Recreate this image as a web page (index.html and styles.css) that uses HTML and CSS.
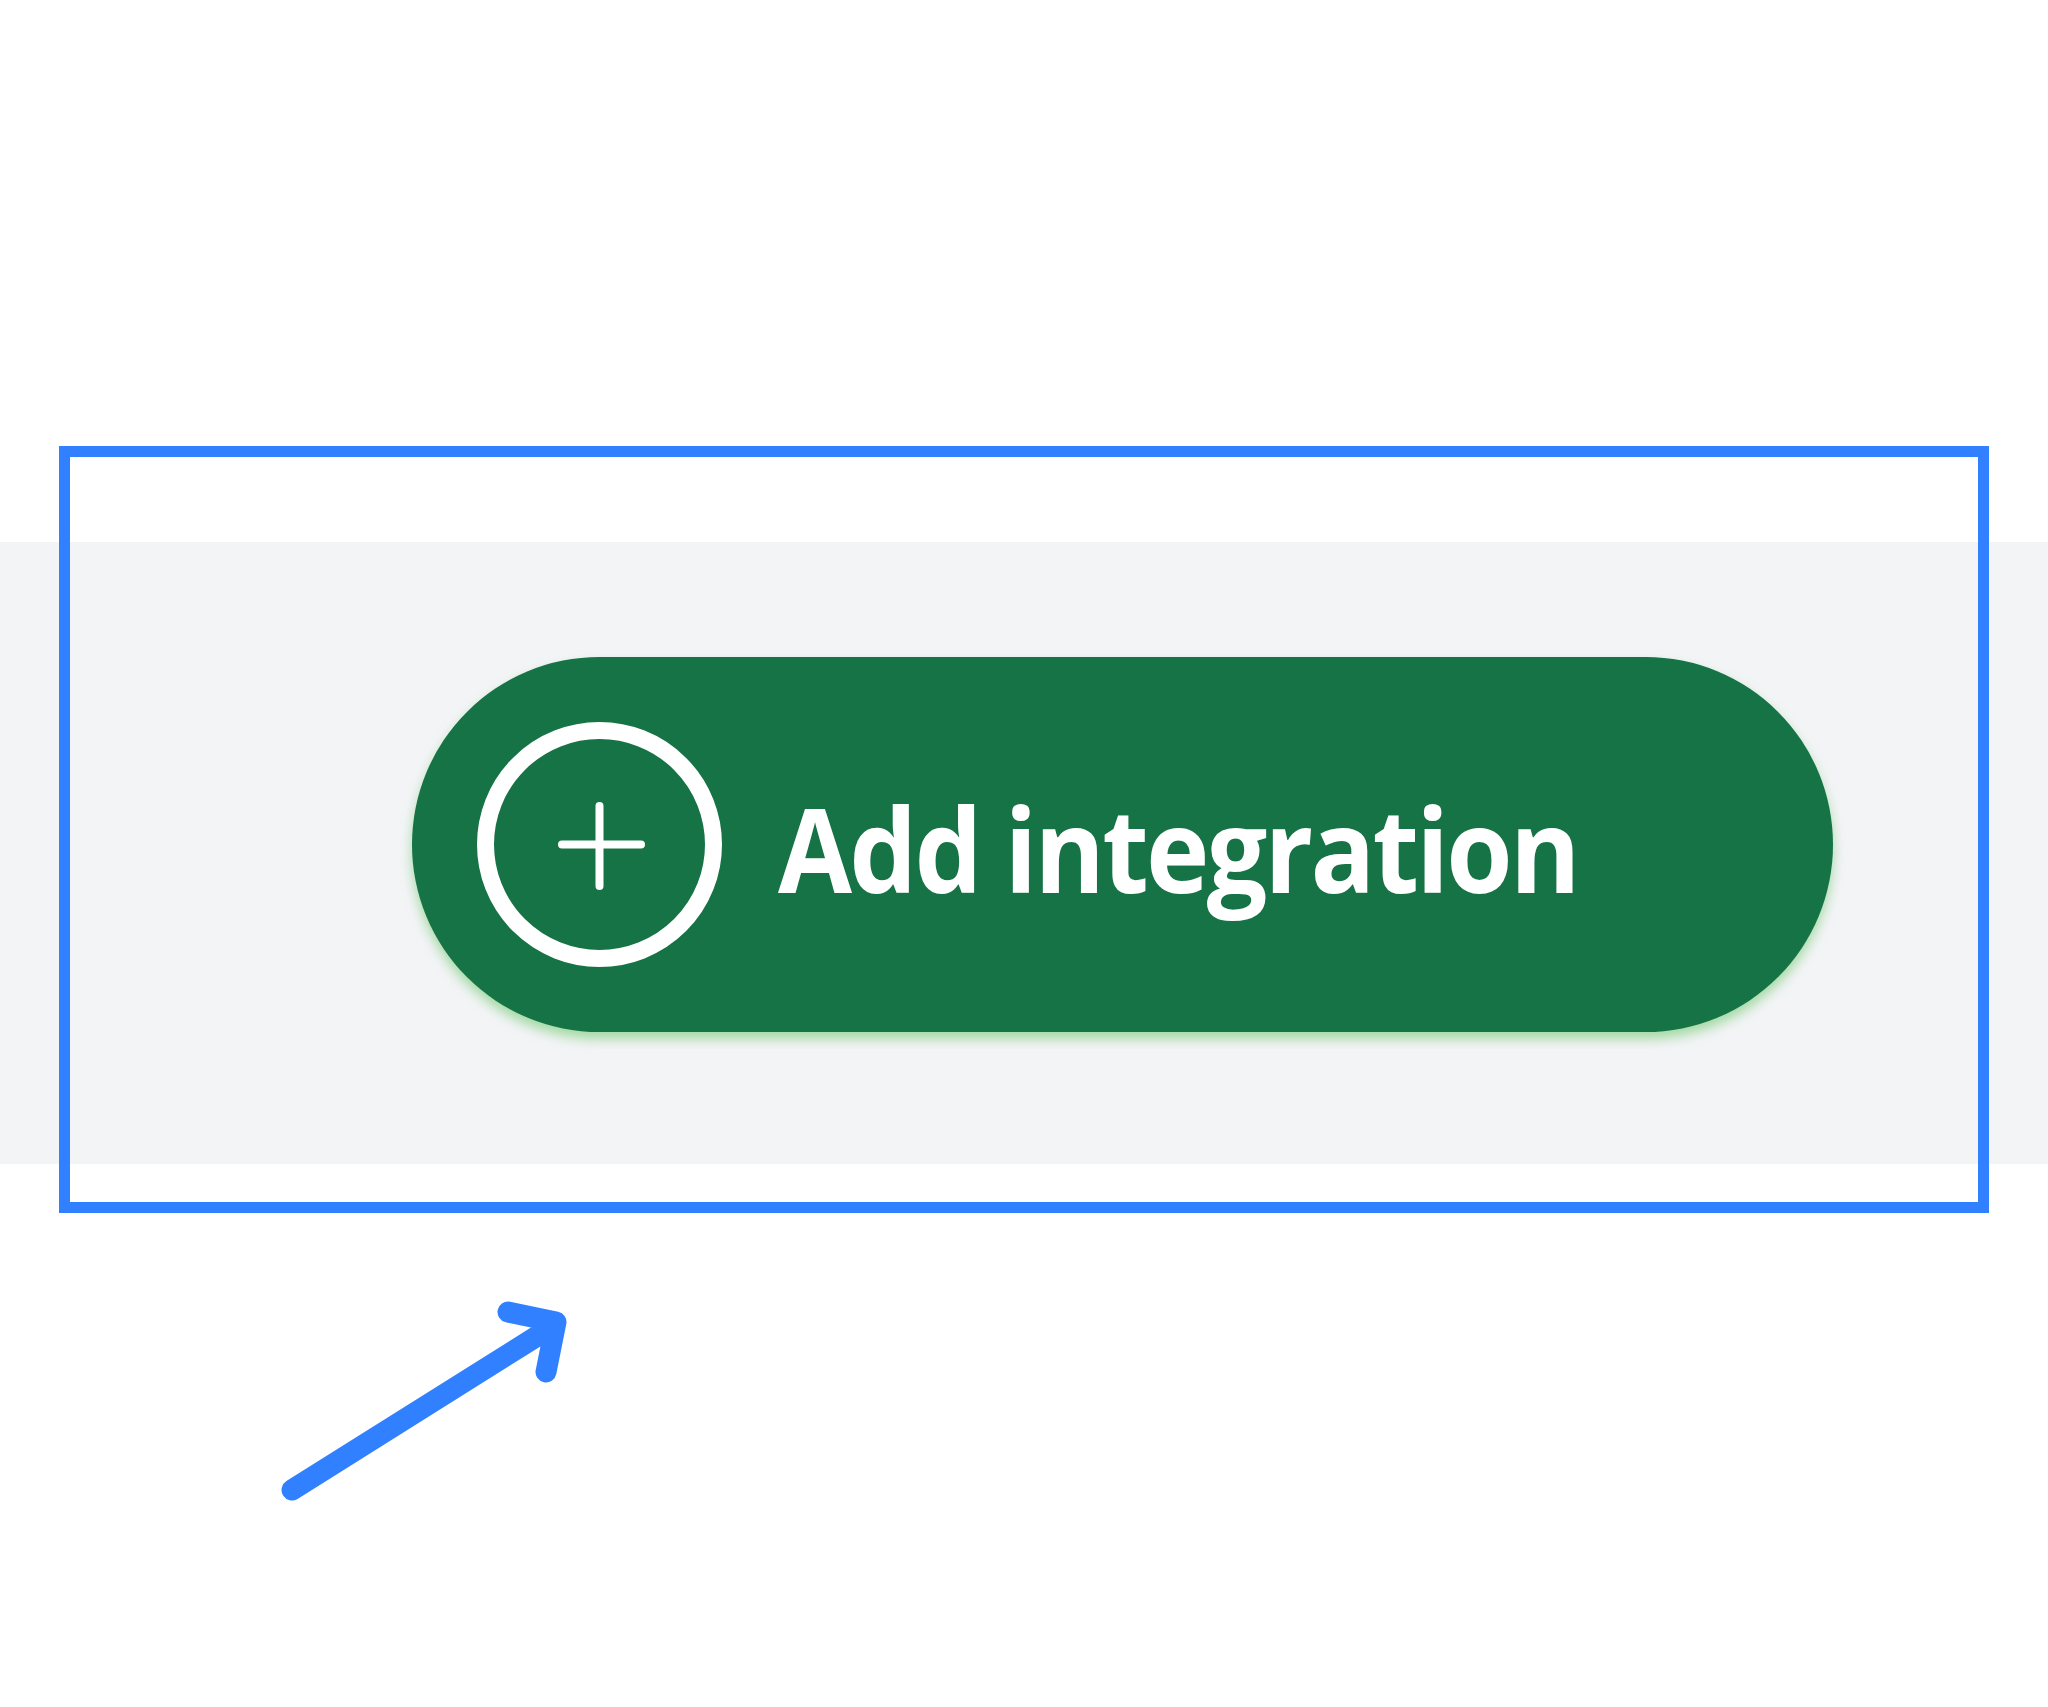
FILE: index.html
```html
<!DOCTYPE html>
<html>
<head>
<meta charset="utf-8">
<link rel="stylesheet" href="styles.css">
</head>
<body>
<div class="page">
  <section class="band">
    <button class="add-btn">
      <svg class="add-icon" viewBox="0 0 245 245" width="245" height="245">
        <circle cx="122.5" cy="122.5" r="114" fill="none" stroke="#fff" stroke-width="17"/>
        <path d="M85 122.5 H164 M122.5 84 V164" stroke="#fff" stroke-width="8" stroke-linecap="round" fill="none"/>
      </svg>
      <span class="add-label">Add integration</span>
    </button>
  </section>
  <div class="highlight"></div>
  <svg class="pointer" viewBox="0 0 2048 1707" width="2048" height="1707">
    <path d="M292 1490 L550 1328 M508 1312 L556 1322 L546 1372" stroke="#3080ff" stroke-width="21" stroke-linecap="round" stroke-linejoin="round" fill="none"/>
  </svg>
</div>
</body>
</html>
```
FILE: styles.css
```css
html, body {
  margin: 0;
  padding: 0;
  background: #ffffff;
}
.page {
  position: relative;
  width: 2048px;
  height: 1707px;
  overflow: hidden;
  padding-top: 542px;
  box-sizing: border-box;
}
.band {
  height: 622px;
  background: #f3f4f6;
  box-sizing: border-box;
  padding: 115px 0 0 412px;
  display: flex;
  align-items: flex-start;
}
.add-btn {
  display: flex;
  align-items: center;
  width: 1421px;
  height: 375px;
  padding: 0 0 0 65px;
  gap: 56px;
  border: none;
  border-radius: 188px;
  background: #167345;
  box-shadow: 0 7px 12px rgba(110, 200, 110, 0.6);
  box-sizing: border-box;
  cursor: pointer;
}
.add-icon {
  flex: none;
  display: block;
}
.add-label {
  display: inline-block;
  font-family: "Open Sans", "Noto Sans", sans-serif;
  font-weight: 700;
  font-size: 116px;
  color: #ffffff;
  letter-spacing: -3px;
  line-height: 1;
  margin-top: 6px;
  transform: scaleX(0.925);
  transform-origin: left center;
}
.highlight {
  position: absolute;
  left: 59px;
  top: 446px;
  width: 1930px;
  height: 767px;
  border: 11px solid #3080ff;
  box-sizing: border-box;
}
.pointer {
  position: absolute;
  left: 0;
  top: 0;
}
```
